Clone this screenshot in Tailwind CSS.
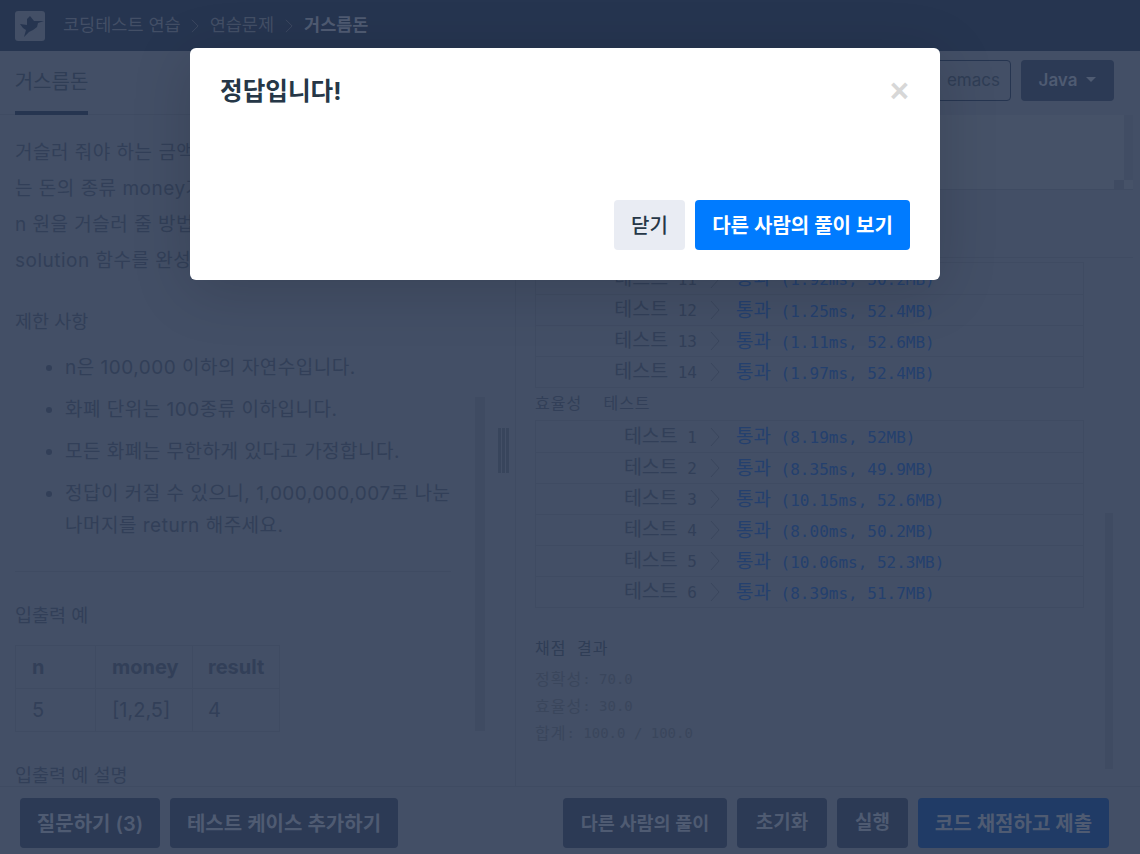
<!DOCTYPE html>
<html lang="ko">
<head>
<meta charset="utf-8">
<title>거스름돈</title>
<script src="https://cdn.jsdelivr.net/npm/@tailwindcss/browser@4"></script>
</head>
<body class="relative h-[854px] w-[1140px] overflow-hidden bg-[#434f66] font-['Inter','Noto_Sans_CJK_KR',sans-serif] text-[#263550]">
<header class="flex h-[51px] items-center bg-[#263550] pl-[15px]">
  <div class="flex h-[30px] w-[30px] items-center justify-center rounded-[3px] bg-[#434f66]">
    <svg viewBox="0 0 30 30" class="h-[30px] w-[30px]"><path d="M5 13L12 14L12 8L15 5L19 10L22 10L29 10L23 12L22 16L18 19L14 21L9 26L11 19L8 17Z" fill="#263550"/></svg>
  </div>
  <nav class="ml-[18px] flex items-center text-[17.5px] text-[#434f66]">
    <span>코딩테스트 연습</span>
    <svg viewBox="0 0 9 16" class="ml-[10px] mr-[11px] h-[16px] w-[8px]" fill="none" stroke="#3f4b62"><path d="M1 1l7 7-7 7"/></svg>
    <span>연습문제</span>
    <svg viewBox="0 0 9 16" class="ml-[11px] mr-[11px] h-[16px] w-[8px]" fill="none" stroke="#3f4b62"><path d="M1 1l7 7-7 7"/></svg>
    <span class="font-bold text-[#4f5b72]">거스름돈</span>
  </nav>
</header>
<main class="flex h-[735px]">
  <section class="relative h-full w-[516px] shrink-0 overflow-hidden border-r border-[#3f4b62]">
    <div class="h-[64px] border-b border-[#3f4b62] px-[15px]">
      <div class="flex h-[64px] w-[73px] items-center justify-center whitespace-nowrap border-b-[4px] border-[#263550] pt-[2px] text-[20px] text-[#2f3d55]">거스름돈</div>
    </div>
    <div class="w-[451px] pl-[15px] text-[19px] leading-[36px] tracking-[0.5px] text-[#323f58]">
      <div class="pt-[20px]">
        <p class="whitespace-nowrap">거슬러 줘야 하는 금액</p>
        <p class="whitespace-nowrap">는 돈의 종류 money가</p>
        <p class="whitespace-nowrap">n 원을 거슬러 줄 방법</p>
        <p class="whitespace-nowrap">solution 함수를 완성</p>
      </div>
      <h5 class="mt-[28px] text-[18.5px] leading-[28px] tracking-normal">제한 사항</h5>
      <ul class="list-disc pl-[50px] pt-[17px] leading-[32px]">
        <li class="mb-[10px]">n은 100,000 이하의 자연수입니다.</li>
        <li class="mb-[10px]">화폐 단위는 100종류 이하입니다.</li>
        <li class="mb-[10px]">모든 화폐는 무한하게 있다고 가정합니다.</li>
        <li>정답이 커질 수 있으니, 1,000,000,007로 나눈 나머지를 return 해주세요.</li>
      </ul>
      <hr class="mt-[29px] border-[#3f4b62]">
      <h5 class="mt-[29px] text-[18.5px] leading-[28px] tracking-normal">입출력 예</h5>
      <table class="mt-[16px] border-collapse text-[20px] leading-[24px] tracking-normal">
        <tbody>
          <tr class="h-[43px] font-bold"><td class="w-[80px] border border-[#3f4b62] pl-[16px]">n</td><td class="w-[97px] border border-[#3f4b62] pl-[16px]">money</td><td class="w-[87px] border border-[#3f4b62] pl-[15px]">result</td></tr>
          <tr class="h-[43px]"><td class="border border-[#3f4b62] pl-[16px]">5</td><td class="border border-[#3f4b62] pl-[16px]">[1,2,5]</td><td class="border border-[#3f4b62] pl-[15px]">4</td></tr>
        </tbody>
      </table>
      <h5 class="mt-[31px] text-[18.5px] leading-[24px] tracking-normal">입출력 예 설명</h5>
    </div>
    <div class="absolute left-[475px] top-[346px] h-[334px] w-[10px] bg-[#3f4b62]"></div>
    <div class="absolute left-[498px] top-[377px] flex h-[45px] gap-[1px]">
      <span class="w-[3px] bg-[#38455c]"></span><span class="w-[3px] bg-[#38455c]"></span><span class="w-[3px] bg-[#38455c]"></span>
    </div>
  </section>
  <section class="relative flex-1 font-['DejaVu_Sans_Mono','Noto_Sans_CJK_KR',monospace]">
    <div class="flex h-[64px] items-start justify-end gap-[10px] pr-[26px] pt-[9px] font-['Inter','Noto_Sans_CJK_KR',sans-serif]">
      <div class="flex h-[41px] w-[90px] items-center justify-end rounded-[4px] border border-[#263550] pr-[10px] text-[17px] text-[#2f3d55]">emacs</div>
      <div class="flex h-[41px] w-[93px] items-center justify-center gap-[9px] rounded-[4px] bg-[#2c3a55] text-[17px] font-semibold text-[#4f5b72]">Java<span class="mb-[3px] h-0 w-0 border-x-[5px] border-t-[5px] border-x-transparent border-t-[#4f5b72]"></span></div>
    </div>
    <div class="relative mr-[7px] h-[75px] border-b border-[#3f4b62] bg-[#465268]">
      <div class="absolute right-0 top-0 h-[65px] w-[9px] bg-[#414d64]"></div>
      <div class="absolute bottom-0 right-[9px] h-[9px] w-[10px] bg-[#3f4b62]"></div>
    </div>
    <div class="mr-[7px] h-[68px] border-b border-[#3f4b62]"></div>
    <div class="relative px-[19px] text-base">
      <div class="mt-[4px] w-[549px] border border-[#3f4b62]">
        <div class="flex h-[31px] items-center"><span class="w-[161px] whitespace-nowrap text-right text-[#323f58]"><span class="text-[19.5px]">테스트</span> 11</span><svg viewBox="0 0 10 20" class="mx-[13px] h-[20px] w-[10px]" fill="none" stroke="#3a465d"><path d="M1 1l8 9-8 9"/></svg><span class="ml-[3px] whitespace-nowrap text-[#24406e]"><span class="text-[19px]">통과</span> (1.92ms, 50.2MB)</span></div>
        <div class="flex h-[31px] items-center border-t border-[#3f4b62]"><span class="w-[161px] whitespace-nowrap text-right text-[#323f58]"><span class="text-[19.5px]">테스트</span> 12</span><svg viewBox="0 0 10 20" class="mx-[13px] h-[20px] w-[10px]" fill="none" stroke="#3a465d"><path d="M1 1l8 9-8 9"/></svg><span class="ml-[3px] whitespace-nowrap text-[#24406e]"><span class="text-[19px]">통과</span> (1.25ms, 52.4MB)</span></div>
        <div class="flex h-[31px] items-center border-t border-[#3f4b62]"><span class="w-[161px] whitespace-nowrap text-right text-[#323f58]"><span class="text-[19.5px]">테스트</span> 13</span><svg viewBox="0 0 10 20" class="mx-[13px] h-[20px] w-[10px]" fill="none" stroke="#3a465d"><path d="M1 1l8 9-8 9"/></svg><span class="ml-[3px] whitespace-nowrap text-[#24406e]"><span class="text-[19px]">통과</span> (1.11ms, 52.6MB)</span></div>
        <div class="flex h-[31px] items-center border-t border-[#3f4b62]"><span class="w-[161px] whitespace-nowrap text-right text-[#323f58]"><span class="text-[19.5px]">테스트</span> 14</span><svg viewBox="0 0 10 20" class="mx-[13px] h-[20px] w-[10px]" fill="none" stroke="#3a465d"><path d="M1 1l8 9-8 9"/></svg><span class="ml-[3px] whitespace-nowrap text-[#24406e]"><span class="text-[19px]">통과</span> (1.97ms, 52.4MB)</span></div>
      </div>
      <p class="mt-[4px] text-[16px] leading-[24px] tracking-[1px] text-[#323f58]">효율성 &nbsp;테스트</p>
      <div class="mt-[4px] w-[549px] border border-[#3f4b62]">
        <div class="flex h-[31px] items-center"><span class="w-[161px] whitespace-nowrap text-right text-[#323f58]"><span class="text-[19.5px]">테스트</span> 1</span><svg viewBox="0 0 10 20" class="mx-[13px] h-[20px] w-[10px]" fill="none" stroke="#3a465d"><path d="M1 1l8 9-8 9"/></svg><span class="ml-[3px] whitespace-nowrap text-[#24406e]"><span class="text-[19px]">통과</span> (8.19ms, 52MB)</span></div>
        <div class="flex h-[31px] items-center border-t border-[#3f4b62]"><span class="w-[161px] whitespace-nowrap text-right text-[#323f58]"><span class="text-[19.5px]">테스트</span> 2</span><svg viewBox="0 0 10 20" class="mx-[13px] h-[20px] w-[10px]" fill="none" stroke="#3a465d"><path d="M1 1l8 9-8 9"/></svg><span class="ml-[3px] whitespace-nowrap text-[#24406e]"><span class="text-[19px]">통과</span> (8.35ms, 49.9MB)</span></div>
        <div class="flex h-[31px] items-center border-t border-[#3f4b62]"><span class="w-[161px] whitespace-nowrap text-right text-[#323f58]"><span class="text-[19.5px]">테스트</span> 3</span><svg viewBox="0 0 10 20" class="mx-[13px] h-[20px] w-[10px]" fill="none" stroke="#3a465d"><path d="M1 1l8 9-8 9"/></svg><span class="ml-[3px] whitespace-nowrap text-[#24406e]"><span class="text-[19px]">통과</span> (10.15ms, 52.6MB)</span></div>
        <div class="flex h-[31px] items-center border-t border-[#3f4b62]"><span class="w-[161px] whitespace-nowrap text-right text-[#323f58]"><span class="text-[19.5px]">테스트</span> 4</span><svg viewBox="0 0 10 20" class="mx-[13px] h-[20px] w-[10px]" fill="none" stroke="#3a465d"><path d="M1 1l8 9-8 9"/></svg><span class="ml-[3px] whitespace-nowrap text-[#24406e]"><span class="text-[19px]">통과</span> (8.00ms, 50.2MB)</span></div>
        <div class="flex h-[31px] items-center border-t border-[#3f4b62]"><span class="w-[161px] whitespace-nowrap text-right text-[#323f58]"><span class="text-[19.5px]">테스트</span> 5</span><svg viewBox="0 0 10 20" class="mx-[13px] h-[20px] w-[10px]" fill="none" stroke="#3a465d"><path d="M1 1l8 9-8 9"/></svg><span class="ml-[3px] whitespace-nowrap text-[#24406e]"><span class="text-[19px]">통과</span> (10.06ms, 52.3MB)</span></div>
        <div class="flex h-[31px] items-center border-t border-[#3f4b62]"><span class="w-[161px] whitespace-nowrap text-right text-[#323f58]"><span class="text-[19.5px]">테스트</span> 6</span><svg viewBox="0 0 10 20" class="mx-[13px] h-[20px] w-[10px]" fill="none" stroke="#3a465d"><path d="M1 1l8 9-8 9"/></svg><span class="ml-[3px] whitespace-nowrap text-[#24406e]"><span class="text-[19px]">통과</span> (8.39ms, 51.7MB)</span></div>
      </div>
      <p class="mt-[27px] text-[16px] leading-[27px] tracking-[1px] text-[#2f3d55]">채점 결과</p>
      <p class="mt-[4px] flex h-[27px] items-center whitespace-pre text-[14px] text-[#3a465c]"><span class="text-[16px] tracking-[1px]">정확성</span>: 70.0</p>
      <p class="flex h-[27px] items-center whitespace-pre text-[14px] text-[#3a465c]"><span class="text-[16px] tracking-[1px]">효율성</span>: 30.0</p>
      <p class="flex h-[27px] items-center whitespace-pre text-[14px] text-[#3a465c]"><span class="text-[16px] tracking-[1px]">합계</span>: 100.0 / 100.0</p>
    </div>
    <div class="absolute left-[589px] top-[462px] h-[256px] w-[8px] bg-[#3f4b62]"></div>
  </section>
</main>
<footer class="flex h-[68px] justify-between border-t border-[#3f4b62] px-[20px] pt-[11px]">
  <div class="flex gap-[10px]">
    <button class="h-[50px] w-[140px] rounded-[4px] bg-[#2c3a55] pt-[1px] text-[20px] font-semibold text-[#4f5b72]">질문하기 (3)</button>
    <button class="h-[50px] w-[228px] rounded-[4px] bg-[#2c3a55] pt-[1px] text-[20px] font-semibold text-[#4f5b72]">테스트 케이스 추가하기</button>
  </div>
  <div class="mr-[11px] flex gap-[10px]">
    <button class="h-[50px] w-[164px] rounded-[4px] bg-[#2c3a55] pt-[1px] text-[18.5px] font-semibold text-[#4f5b72]">다른 사람의 풀이</button>
    <button class="h-[50px] w-[90px] rounded-[4px] bg-[#2c3a55] pt-[1px] text-[19px] font-semibold text-[#4f5b72]">초기화</button>
    <button class="h-[50px] w-[71px] rounded-[4px] bg-[#2c3a55] pt-[1px] text-[19px] font-semibold text-[#4f5b72]">실행</button>
    <button class="h-[50px] w-[191px] rounded-[4px] bg-[#203b66] pt-[1px] text-[20px] font-semibold text-[#4f5b72]">코드 채점하고 제출</button>
  </div>
</footer>
<div class="absolute left-[190px] top-[48px] flex h-[232px] w-[750px] flex-col rounded-[6px] bg-white p-[30px] shadow-[0_10px_60px_rgba(0,0,0,0.15)]">
  <div class="flex items-start justify-between">
    <h4 class="text-[24.6px] font-bold leading-[26px] text-[#263747]">정답입니다!</h4>
    <span class="mr-[1px] font-['Liberation_Sans',sans-serif] text-[33px] font-bold leading-[26px] text-[#d7d7d7]">×</span>
  </div>
  <div class="mt-auto flex justify-end gap-[10px] text-[20px] font-semibold">
    <button class="h-[50px] w-[71px] rounded-[4px] bg-[#e9ecf3] pt-[1px] font-medium text-[#263747]">닫기</button>
    <button class="h-[50px] w-[215px] rounded-[4px] bg-[#007bff] pt-[1px] text-white">다른 사람의 풀이 보기</button>
  </div>
</div>
</body>
</html>
